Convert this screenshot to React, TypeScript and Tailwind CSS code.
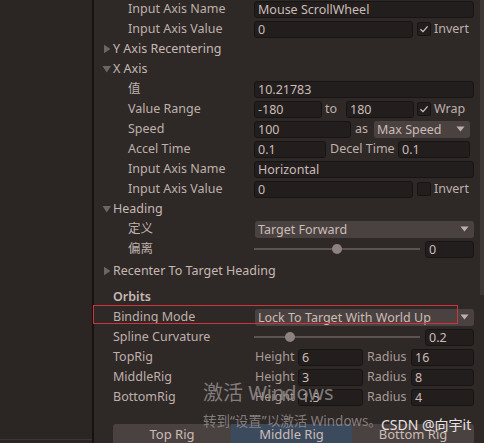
import React from "react";

const FONT = { fontFamily: '"Noto Sans", "Noto Sans CJK SC", sans-serif' };

function Input({ value, w }: { value: string; w: string }) {
  return (
    <div
      className={`${w} h-[17px] rounded-[3px] border border-[#181413] bg-[#221e1d] pl-[3px] leading-[15px] text-[#cbbcb7] overflow-hidden whitespace-nowrap`}
    >
      {value}
    </div>
  );
}

function Check({ on }: { on: boolean }) {
  return (
    <div className="w-[14px] h-[14px] rounded-[2px] border border-[#181413] bg-[#221e1d] flex items-center justify-center">
      {on && (
        <svg width="10" height="10" viewBox="0 0 10 10">
          <path d="M1.5 5.2 L4 7.6 L8.6 2.4" stroke="#cfc2bd" strokeWidth="1.3" fill="none" />
        </svg>
      )}
    </div>
  );
}

function Drop({ value, w }: { value: string; w: string }) {
  return (
    <div
      className={`${w} h-[17px] rounded-[3px] bg-[#4a4240] pl-[3px] pr-[5px] flex items-center justify-between text-[#cbbcb7] whitespace-nowrap`}
    >
      <span className="leading-[15px]">{value}</span>
      <svg width="9" height="6" viewBox="0 0 9 6">
        <path d="M0.5 0.5 L8.5 0.5 L4.5 5.5 Z" fill="#bdb0ab" />
      </svg>
    </div>
  );
}

function Slider({ pos, value }: { pos: number; value: string }) {
  return (
    <div className="flex items-center w-[220px]">
      <div className="relative w-[166px] h-[12px] flex items-center">
        <div className="w-full h-[2px] bg-[#5b5351]" />
        <div
          className="absolute top-[1px] w-[10px] h-[10px] rounded-full bg-[#8d8280]"
          style={{ left: pos }}
        />
      </div>
      <div className="ml-[5px]">
        <Input value={value} w="w-[49px]" />
      </div>
    </div>
  );
}

function Row({
  label,
  children,
  indent = true,
  className = "",
}: {
  label: string;
  children?: React.ReactNode;
  indent?: boolean;
  className?: string;
}) {
  return (
    <div className={`h-[20px] flex items-center ${className}`}>
      <div className={`w-[160px] shrink-0 ${indent ? "pl-[34px]" : "pl-[19px]"} text-[#bfb0ab]`}>{label}</div>
      <div className="w-[220px] flex items-center">{children}</div>
    </div>
  );
}

function Header({ label, open, className = "" }: { label: string; open: boolean; className?: string }) {
  return (
    <div className={`h-[20px] flex items-center pl-[8px] ${className}`}>
      <svg width="10" height="10" viewBox="0 0 10 10" className="mr-[1px]">
        {open ? <path d="M0.5 2 L9 2 L4.75 8.5 Z" fill="#6e6461" /> : <path d="M2 0.8 L8.5 5 L2 9.2 Z" fill="#6e6461" />}
      </svg>
      <span className="text-[#c7b8b3]">{label}</span>
    </div>
  );
}

export default function App() {
  return (
    <div className="w-[484px] h-[443px] overflow-hidden flex bg-[#2e2927] text-[12.5px] relative" style={FONT}>
      {/* left panel */}
      <div className="w-[92px] h-full bg-[#2b2624] flex flex-col justify-end">
        <div className="h-[4px] border-t border-[#3b3533]" />
      </div>
      <div className="w-[2px] h-full bg-[#161211]" />
      {/* right panel */}
      <div className="flex-1 flex flex-col">
        <div className="-mt-[1px]">
          <Row label="Input Axis Name">
            <Input value="Mouse ScrollWheel" w="w-[220px]" />
          </Row>
          <Row label="Input Axis Value">
            <Input value="0" w="w-[159px]" />
            <div className="ml-[4px]">
              <Check on />
            </div>
            <span className="ml-[3px] text-[#bfb0ab]">Invert</span>
          </Row>
          <Header label="Y Axis Recentering" open={false} />
          <Header label="X Axis" open />
          <Row label="值">
            <Input value="10.21783" w="w-[220px]" />
          </Row>
          <Row label="Value Range">
            <Input value="-180" w="w-[68px]" />
            <span className="w-[24px] pl-[3px] text-[#bfb0ab]">to</span>
            <Input value="180" w="w-[68px]" />
            <div className="ml-[3px]">
              <Check on />
            </div>
            <span className="ml-[3px] text-[#bfb0ab]">Wrap</span>
          </Row>
          <Row label="Speed">
            <Input value="100" w="w-[97px]" />
            <span className="w-[23px] pl-[4px] text-[#bfb0ab]">as</span>
            <Drop value="Max Speed" w="w-[96px]" />
          </Row>
          <Row label="Accel Time">
            <Input value="0.1" w="w-[72px]" />
            <span className="w-[72px] pl-[4px] text-[#bfb0ab] whitespace-nowrap">Decel Time</span>
            <Input value="0.1" w="w-[72px]" />
          </Row>
          <Row label="Input Axis Name">
            <Input value="Horizontal" w="w-[220px]" />
          </Row>
          <Row label="Input Axis Value">
            <Input value="0" w="w-[159px]" />
            <div className="ml-[4px]">
              <Check on={false} />
            </div>
            <span className="ml-[3px] text-[#bfb0ab]">Invert</span>
          </Row>
          <Header label="Heading" open />
          <Row label="定义">
            <Drop value="Target Forward" w="w-[219px] ml-[1px]" />
          </Row>
          <Row label="偏离">
            <Slider pos={78} value="0" />
          </Row>
          <Header label="Recenter To Target Heading" open={false} className="mt-[2px]" />
          <div className="h-[20px] mt-[6px] flex items-center pl-[19px] font-semibold text-[#c7b8b3]">Orbits</div>
          <Row label="Binding Mode" indent={false}>
            <Drop value="Lock To Target With World Up" w="w-[219px] ml-[1px]" />
          </Row>
          <Row label="Spline Curvature" indent={false}>
            <Slider pos={31} value="0.2" />
          </Row>
          {[
            ["TopRig", "6", "16"],
            ["MiddleRig", "3", "8"],
            ["BottomRig", "1.5", "4"],
          ].map(([n, h, r]) => (
            <Row key={n} label={n} indent={false}>
              <span className="w-[44px] pl-[1px] text-[#a99c97]">Height</span>
              <Input value={h} w="w-[65px]" />
              <span className="w-[48px] pl-[4px] text-[#a99c97]">Radius</span>
              <Input value={r} w="w-[63px]" />
            </Row>
          ))}
          <div className="mt-[17px] ml-[19px] flex h-[22px]">
            <div className="w-[118px] bg-[#4a4240] rounded-t-[3px] flex items-center justify-center text-[13px] text-[#cbbcb7]">
              Top Rig
            </div>
            <div className="w-[121px] bg-[#3c4a5d] flex items-center justify-center text-[13px] text-[#cbbcb7]">
              Middle Rig
            </div>
            <div className="w-[122px] bg-[#4a4240] rounded-t-[3px] flex items-center justify-center text-[13px] text-[#cbbcb7]">
              Bottom Rig
            </div>
          </div>
        </div>
      </div>
      {/* scrollbar */}
      <div className="w-[4px] h-full flex flex-col">
        <div className="h-[295px] bg-[#3d3735]" />
      </div>

      {/* red highlight box */}
      <div className="absolute left-[93px] top-[305px] w-[365px] h-[19px] border border-[#d0343a]" />

      {/* watermark */}
      <div className="absolute left-[203px] top-[383px] text-[20px] text-[#8e8887]/90 leading-none whitespace-nowrap">激活 Windows</div>
      <div className="absolute left-[203px] top-[415px] text-[13.5px] text-[#8e8887]/90 leading-none whitespace-nowrap">
        转到“设置”以激活 Windows。
      </div>
      <div className="absolute left-[381px] top-[418px] text-[14px] text-[#e8e2e0] leading-none whitespace-nowrap">
        CSDN @向宇it
      </div>
    </div>
  );
}
